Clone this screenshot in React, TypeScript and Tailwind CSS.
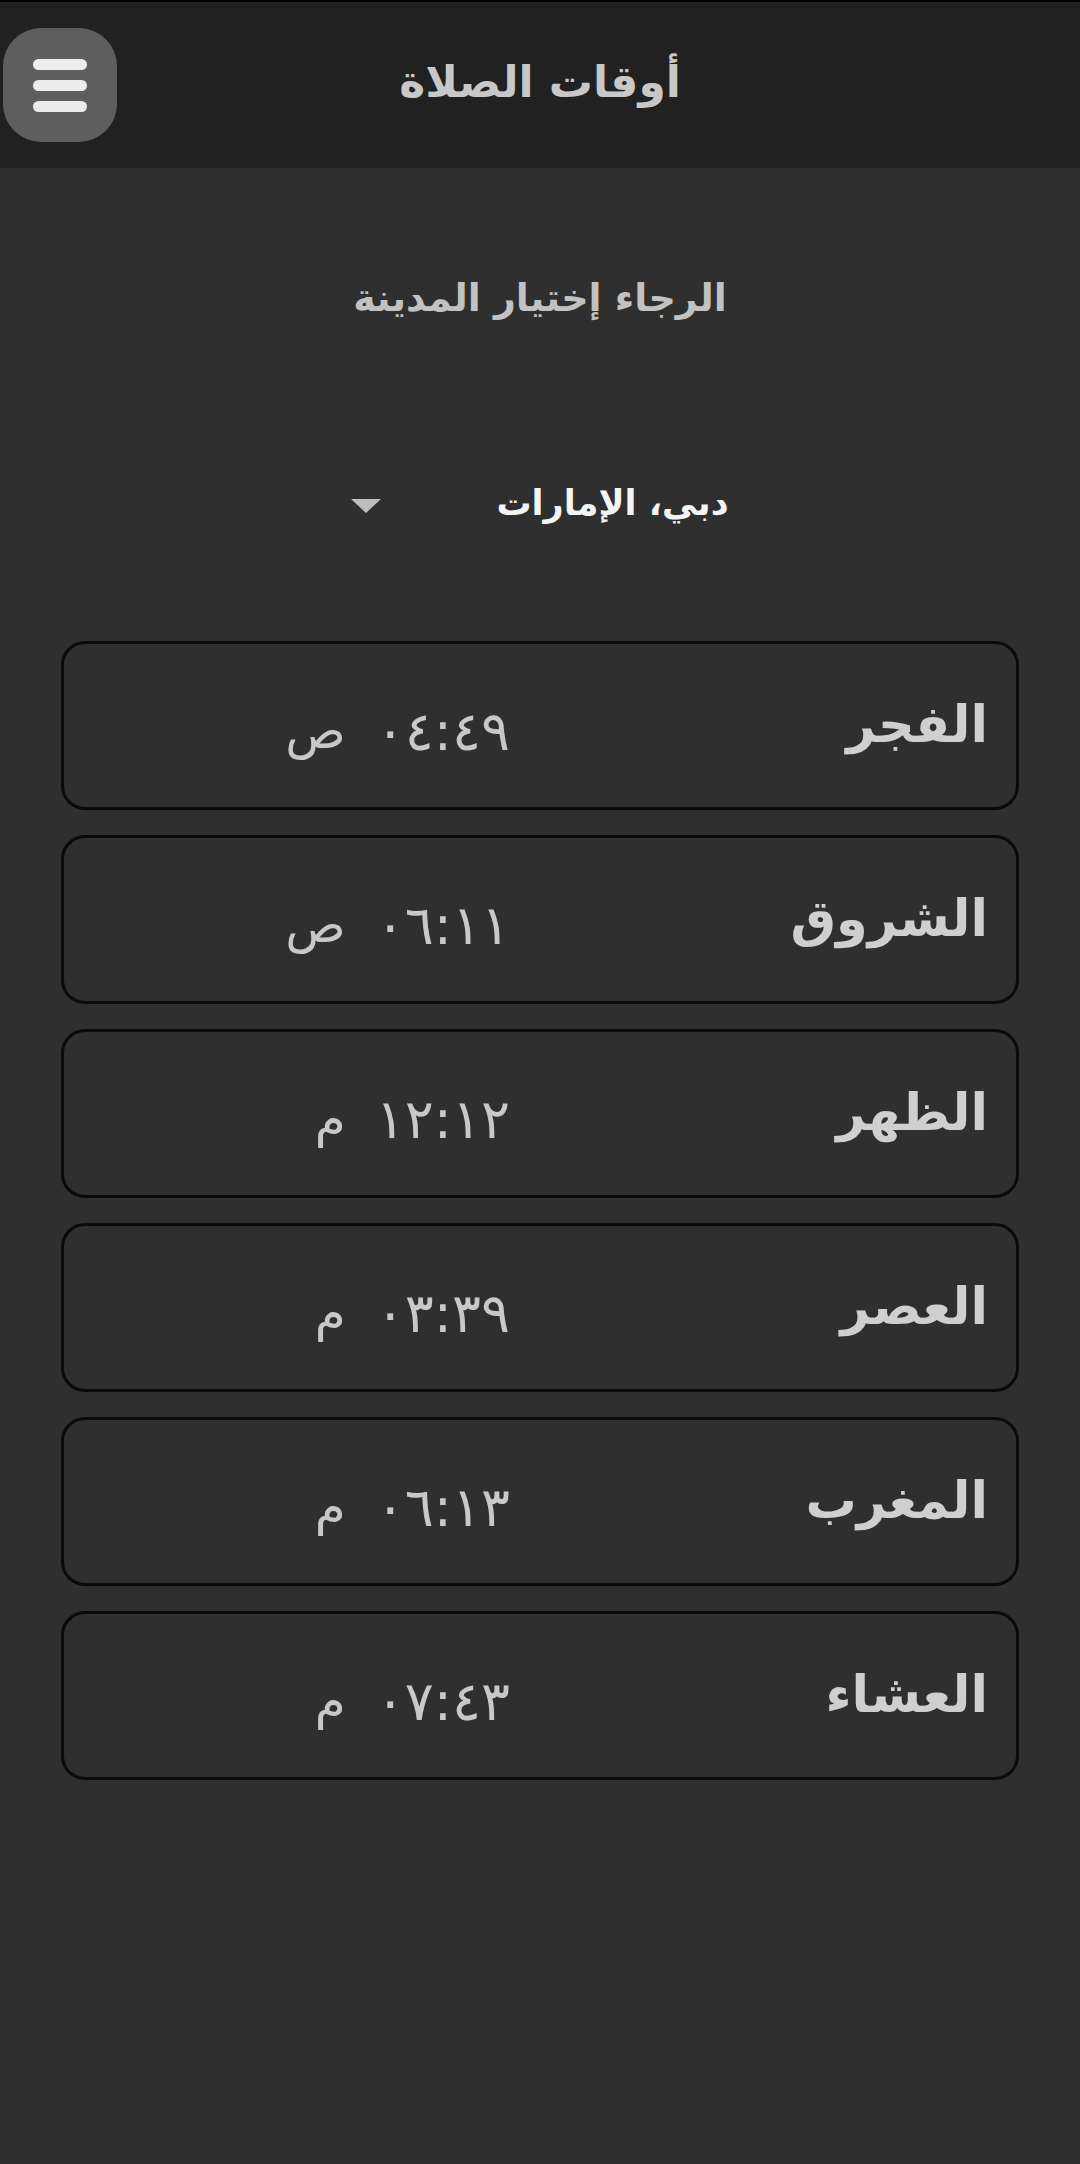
import React from 'react';

const prayers = [
  { name: 'الفجر', time: '٠٤:٤٩', period: 'ص' },
  { name: 'الشروق', time: '٠٦:١١', period: 'ص' },
  { name: 'الظهر', time: '١٢:١٢', period: 'م' },
  { name: 'العصر', time: '٠٣:٣٩', period: 'م' },
  { name: 'المغرب', time: '٠٦:١٣', period: 'م' },
  { name: 'العشاء', time: '٠٧:٤٣', period: 'م' },
];

const font = { fontFamily: '"DejaVu Sans", "Noto Sans", sans-serif' };

function MenuButton() {
  return (
    <button className="absolute left-[3px] top-[26px] w-[114px] h-[114px] rounded-[38px] bg-[#5e5e5e] flex flex-col items-center justify-center gap-[10px]">
      <span className="block w-[54px] h-[11px] rounded-full bg-[#ececec]" />
      <span className="block w-[54px] h-[11px] rounded-full bg-[#ececec]" />
      <span className="block w-[54px] h-[11px] rounded-full bg-[#ececec]" />
    </button>
  );
}

export default function App() {
  return (
    <div dir="rtl" className="min-h-[2164px] bg-[#2f2f2f] flex flex-col" style={font}>
      {/* header */}
      <header className="relative h-[168px] bg-[#212121] border-t-2 border-black flex items-center justify-center shrink-0">
        <h1 className="text-[44px] font-bold text-[#c8c8c8] -mt-[6px]">أوقات الصلاة</h1>
        <MenuButton />
      </header>

      <main className="flex flex-col items-center">
        <p className="mt-[104px] text-[38px] font-bold text-[#c2c2c2] leading-[52px]">الرجاء إختيار المدينة</p>

        <div className="mt-[153px] flex items-center gap-[115px]">
          <span className="text-[35px] font-bold text-[#f4f4f4] leading-[52px]">دبي، الإمارات</span>
          <span className="block w-0 h-0 border-l-[15px] border-r-[15px] border-t-[14px] border-l-transparent border-r-transparent border-t-[#bdbdbd] mt-[6px]" />
        </div>

        <div className="mt-[112px] w-full px-[61px] flex flex-col gap-[25px]">
          {prayers.map((p) => (
            <div
              key={p.name}
              className="h-[169px] rounded-[24px] border-[3px] border-[#0a0a0a] grid grid-cols-2 items-center"
            >
              <span className="pr-[28px] text-[51px] font-bold text-[#cfcfcf] text-right">{p.name}</span>
              <span className="pr-[30px] pt-[12px] flex items-center gap-[30px] text-[#c8c8c8]">
                <span className="text-[54px] tracking-[2px]">{p.time}</span>
                <span className="text-[50px]">{p.period}</span>
              </span>
            </div>
          ))}
        </div>
      </main>
    </div>
  );
}
